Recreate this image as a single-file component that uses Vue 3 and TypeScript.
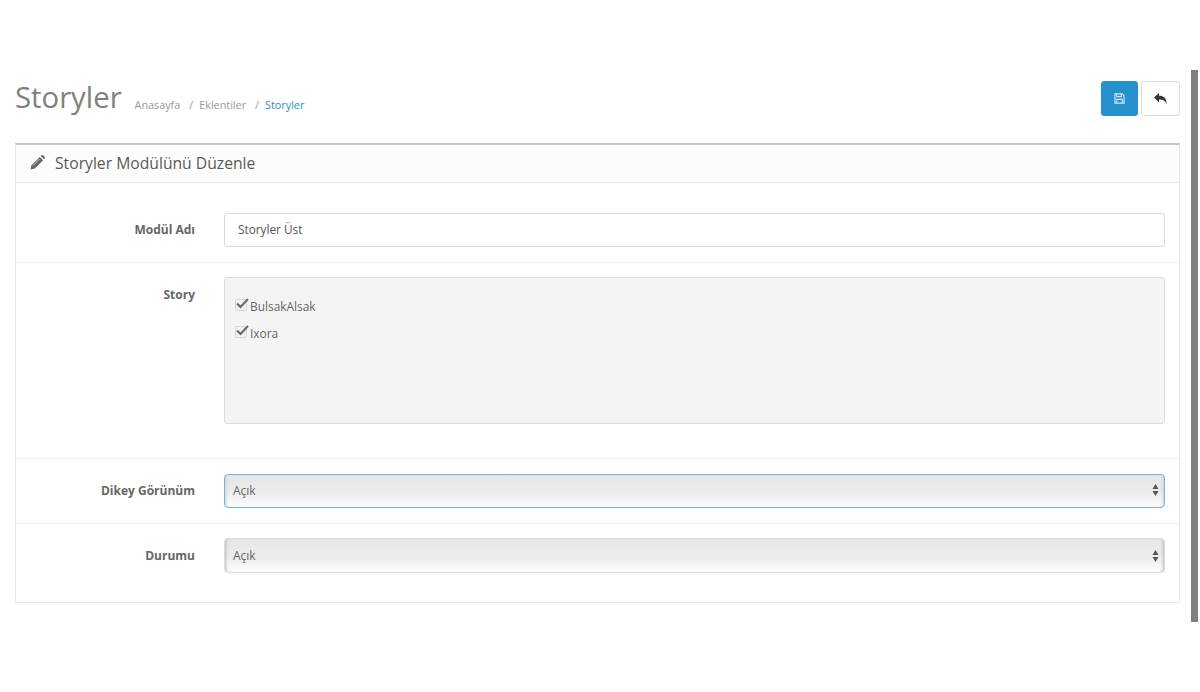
<script setup lang="ts">
const crumbs: string[] = ['Anasayfa', 'Eklentiler']
const stories: string[] = ['BulsakAlsak', 'Ixora']
</script>

<template>
  <div class="page">
    <div class="scrollbar"></div>
    <header class="head">
      <h1 class="title">Storyler</h1>
      <ul class="crumbs">
        <li v-for="c in crumbs" :key="c" class="crumb">{{ c }}<span class="sep">/</span></li>
        <li class="crumb active">Storyler</li>
      </ul>
      <div class="actions">
        <button class="btn primary" type="button" aria-label="Kaydet">
          <svg width="11" height="11" viewBox="0 0 12 12" fill="none" stroke="#cfe6f5" stroke-width="1.2">
            <path d="M1 1h8l2 2v8H1z" />
            <path d="M3 1v3h5V1" />
            <path d="M3 11V7h6v4" />
          </svg>
        </button>
        <button class="btn plain" type="button" aria-label="Geri">
          <svg width="13" height="12" viewBox="0 0 13 12" fill="#333">
            <path d="M0 4.500 5 0v2.800c4.500 0 7.600 1.800 7.600 8.700-1.300-3.700-3.400-4.900-7.600-4.900V9.500z" />
          </svg>
        </button>
      </div>
    </header>

    <section class="panel">
      <div class="panel-head">
        <svg class="pencil" width="15" height="15" viewBox="0 0 15 15" fill="#666">
          <path d="M0.500 14.500 1.500 10.200 9.800 1.900 13.100 5.200 4.800 13.500z" />
          <path d="M10.700 1 11.500 0.300c.5-.4 1.100-.4 1.500 0L14.700 2c.4.4.4 1 0 1.500L14 4.300z" />
          <path d="M3 10.500 9.500 4" stroke="#fcfcfc" stroke-width=".7" />
        </svg>
        <h3 class="panel-title">Storyler Modülünü Düzenle</h3>
      </div>

      <div class="row first">
        <label class="lbl">Modül Adı</label>
        <input class="text" type="text" value="Storyler Üst" />
      </div>

      <div class="row story-row">
        <label class="lbl">Story</label>
        <div class="well">
          <div v-for="s in stories" :key="s" class="check-row">
            <span class="box">
              <svg width="13" height="11" viewBox="0 0 13 11" fill="none" stroke="#666" stroke-width="2">
                <path d="M1 5.500 4.500 9 12 1" />
              </svg>
            </span>
            <span class="check-text">{{ s }}</span>
          </div>
        </div>
      </div>

      <div class="row select-row">
        <label class="lbl">Dikey Görünüm</label>
        <div class="select focus">
          <span>Açık</span>
          <svg class="updown" width="7" height="12" viewBox="0 0 7 12" fill="#555">
            <path d="M3.500 0 6.500 5H.5zM3.500 12 .5 7h6z" />
          </svg>
        </div>
      </div>

      <div class="row select-row last">
        <label class="lbl">Durumu</label>
        <div class="select">
          <span>Açık</span>
          <svg class="updown" width="7" height="12" viewBox="0 0 7 12" fill="#555">
            <path d="M3.500 0 6.500 5H.5zM3.500 12 .5 7h6z" />
          </svg>
        </div>
      </div>
    </section>
  </div>
</template>

<style>
html, body { margin: 0; background: #fff; }
</style>

<style scoped>
.page {
  position: relative;
  height: 692px;
  overflow: hidden;
  box-sizing: border-box;
  padding: 70px 20px 0 15px;
  font-family: "Open Sans", "Liberation Sans", sans-serif;
  font-size: 12px;
  color: #666;
  background: #fff;
}
.scrollbar {
  position: absolute;
  left: 1191px;
  top: 70px;
  width: 7px;
  height: 552px;
  background: #7f7f7f;
}
.head {
  display: flex;
  align-items: flex-start;
  height: 73px;
}
.title {
  margin: 7px 0 0;
  font-size: 29.3px;
  line-height: 40px;
  font-weight: 400;
  color: #808080;
}
.crumbs {
  display: flex;
  list-style: none;
  margin: 27px 0 0 13px;
  padding: 0;
  font-size: 10.8px;
  line-height: 15px;
  color: #999;
}
.crumb.active { color: #1e91cf; }
.sep { margin: 0 6px 0 9px; }
.actions {
  margin-left: auto;
  margin-top: 11px;
  display: flex;
  gap: 3px;
}
.btn {
  display: flex;
  align-items: center;
  justify-content: center;
  height: 35px;
  padding: 0;
  border-radius: 3px;
  box-sizing: border-box;
}
.primary { width: 37px; background: #2591cd; border: 1px solid #2591cd; }
.plain { width: 39px; background: #fff; border: 1px solid #ddd; }
.panel {
  border: 1px solid #e8e8e8;
  border-top: 2px solid #c4c4c4;
  height: 460px;
  box-sizing: border-box;
}
.panel-head {
  display: flex;
  align-items: center;
  height: 35px;
  padding: 0 0 2px 14px;
  background: #fcfcfc;
  border-bottom: 1px solid #e8e8e8;
}
.pencil { flex: none; }
.panel-title {
  margin: 0 0 0 10px;
  font-size: 15.7px;
  font-weight: 400;
  color: #595959;
}
.row {
  display: flex;
  align-items: flex-start;
  padding: 15px 14px 15px 0;
  border-bottom: 1px solid #f0f0f0;
}
.first { height: 80px; box-sizing: border-box; padding-top: 30px; }
.story-row { height: 196px; box-sizing: border-box; padding-top: 14px; }
.story-row .lbl { margin-top: 1px; }
.select-row { height: 65px; box-sizing: border-box; }
.select-row.last { border-bottom: 0; height: 79px; padding-top: 14px; }
.last .lbl { margin-top: 1px; }
.last .select { height: 35px; padding-bottom: 0; }
.lbl {
  flex: none;
  width: 179px;
  margin-right: 29px;
  text-align: right;
  font-size: 12px;
  font-weight: 700;
  line-height: 34px;
  color: #666;
}
.text {
  flex: 1;
  min-width: 0;
  height: 34px;
  box-sizing: border-box;
  padding: 0 13px 2px;
  border: 1px solid #d9d9d9;
  border-radius: 3px;
  font: 11.8px "Open Sans", "Liberation Sans", sans-serif;
  color: #555;
  outline: none;
}
.well {
  flex: 1;
  height: 147px;
  box-sizing: border-box;
  padding: 13px 10px 0;
  background: #f4f4f4;
  border: 1px solid #dcdcdc;
  border-radius: 3px;
}
.check-row {
  display: flex;
  align-items: center;
  height: 27px;
}
.box {
  position: relative;
  width: 12px;
  height: 12px;
  margin-right: 3px;
  background: #f0f0f0;
  border: 1px solid #d8d8d8;
  border-radius: 2px;
  box-sizing: border-box;
}
.box svg { position: absolute; left: 0; top: -2px; }
.check-text { font-size: 11.9px; color: #666; position: relative; top: 1px; }
.select {
  flex: 1;
  height: 34px;
  box-sizing: border-box;
  display: flex;
  align-items: center;
  justify-content: space-between;
  padding: 0 5px 2px 8px;
  border: 1px solid #dcdcdc;
  border-radius: 4px;
  background: linear-gradient(#e6e6e6, #ececec 55%, #fdfdfd);
  box-shadow: inset 3px 0 3px -2px #bbb, inset -3px 0 3px -2px #bbb;
  font-size: 12px;
  color: #666;
}
.select.focus {
  border-color: #74b4e6;
  box-shadow: inset 3px 0 3px -2px #ccc, inset -3px 0 3px -2px #ccc;
}
.updown { flex: none; }
</style>
